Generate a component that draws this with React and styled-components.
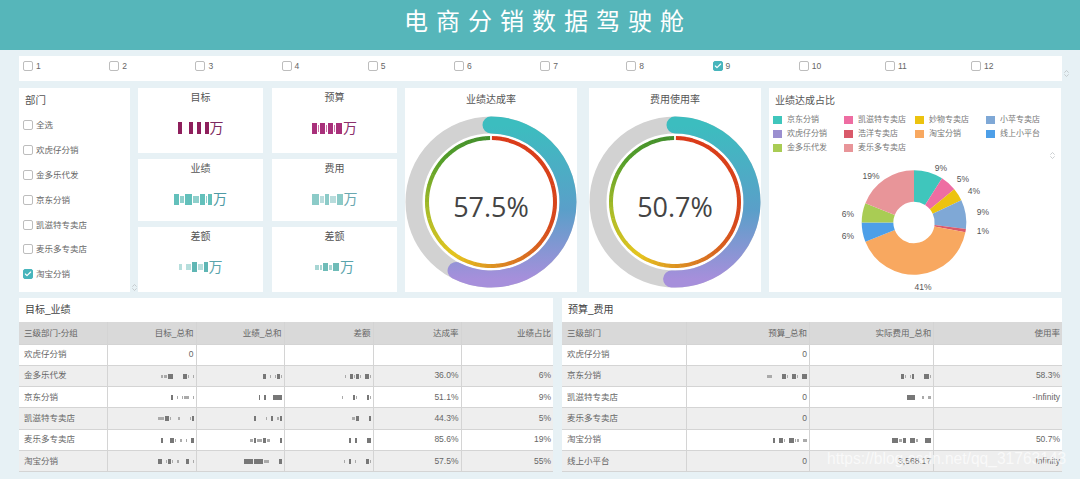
import React from 'react';
import styled, { createGlobalStyle } from 'styled-components';
import { Check, ChevronsUpDown } from 'lucide-react';

const FONT = '"Liberation Sans", "Noto Sans CJK SC", sans-serif';

const GlobalStyle = createGlobalStyle`
	html, body {
		margin: 0;
		padding: 0;
		background: #e7f1f5;
		font-family: ${FONT};
	}
`;

const Page = styled.div`
	position: relative;
	width: 1080px;
	height: 479px;
	overflow: hidden;
	background: #e7f1f5;
`;

const Header = styled.header`
	height: 50px;
	background: #56b6ba;
	color: #fff;
	font-size: 24px;
	line-height: 44px;
	letter-spacing: 8px;
	text-align: center;
	text-indent: 16px;
`;

const Content = styled.main`
	display: flex;
	flex-direction: column;
	gap: 6px;
	padding: 6px 18px 0 19px;
`;

const Card = styled.section`
	position: relative;
	background: #fff;
`;

const MonthBar = styled(Card)`
	display: grid;
	grid-template-columns: repeat(12, 86.2px);
	align-items: center;
	box-sizing: border-box;
	height: 25px;
	padding: 0 0 5px 4px;
	margin-bottom: 1px;
`;

const Hint = styled.span`
	position: absolute;
	display: flex;
	right: ${(p) => p.$right}px;
	bottom: ${(p) => p.$bottom}px;
	color: #b9bfc2;
`;

const Option = styled.label`
	display: flex;
	align-items: center;
	gap: 3px;
	font-size: 8.5px;
	line-height: 10px;
	color: #666;
`;

const Box = styled.span`
	display: flex;
	align-items: center;
	justify-content: center;
	box-sizing: border-box;
	width: 10px;
	height: 10px;
	border-radius: 2px;
	color: #fff;
	background: ${(p) => (p.$checked ? '#47b5bc' : '#fff')};
	border: 1px solid ${(p) => (p.$checked ? '#47b5bc' : '#bdbdbd')};
`;

const MiddleRow = styled.div`
	display: flex;
	height: 204px;
`;

const DeptCard = styled(Card)`
	width: 111px;
	margin-right: 8px;
	padding: 6px 0 0 4px;
	box-sizing: border-box;
`;

const DeptTitle = styled.h3`
	margin: 0 0 13px 2px;
	font-size: 10.5px;
	line-height: 13px;
	font-weight: 400;
	color: #555;
`;

const DeptList = styled.div`
	display: flex;
	flex-direction: column;
	gap: 14.9px;
`;

const KpiGrid = styled.div`
	display: grid;
	grid-template-columns: 125px 125px;
	grid-template-rows: 65px 62px 65px;
	gap: 6px 9px;
	width: 259px;
	margin-right: 8px;
`;

const KpiCard = styled(Card)`
	display: flex;
	flex-direction: column;
	align-items: center;
`;

const KpiTitle = styled.div`
	margin-top: 3px;
	font-size: 10px;
	line-height: 14px;
	color: #555;
`;

const KpiValue = styled.div`
	display: flex;
	align-items: center;
	gap: 1px;
	height: 16px;
	margin-top: 15px;
	font-size: 14px;
	line-height: 16px;
	color: ${(p) => p.$color};
`;

const GaugeCard = styled(Card)`
	width: 172px;
	margin-right: ${(p) => p.$gap}px;
`;

const ChartTitle = styled.h3`
	margin: 0;
	font-size: 10px;
	line-height: 24px;
	font-weight: 400;
	color: #555;
	text-align: center;
`;

const ChartSvg = styled.svg`
	display: block;
`;

const PieCard = styled(Card)`
	width: 292px;
	box-sizing: border-box;
`;

const PieTitle = styled.h3`
	margin: 0;
	padding: 6px 0 0 6px;
	font-size: 10px;
	line-height: 14px;
	font-weight: 400;
	color: #555;
`;

const Legend = styled.div`
	display: grid;
	grid-template-columns: repeat(4, 71px);
	grid-auto-rows: 14.4px;
	align-items: center;
	padding: 4.5px 0 0 4px;
	height: 47px;
	box-sizing: border-box;
`;

const LegendItem = styled.div`
	display: flex;
	align-items: center;
	gap: 5px;
	font-size: 8px;
	line-height: 10px;
	color: #777;
`;

const Swatch = styled.span`
	width: 9px;
	height: 8px;
	background: ${(p) => p.$color};
`;

const TablesRow = styled.div`
	display: flex;
	gap: 9px;
`;

const TableCard = styled(Card)`
	width: ${(p) => p.$width}px;
`;

const TableTitle = styled.h3`
	margin: 0;
	padding-left: 6px;
	font-size: 10px;
	line-height: 24px;
	font-weight: 400;
	color: #444;
`;

const Table = styled.table`
	width: 100%;
	border-collapse: collapse;
	table-layout: fixed;
	font-size: 8.5px;
	line-height: 10px;
	color: #666;

	th,
	td {
		height: 21.3px;
		padding: 0 2px 1px 5px;
		box-sizing: border-box;
		border: 1px solid #d4d4d4;
		border-width: 0 1px 1px 0;
		text-align: right;
		font-weight: 400;
		white-space: nowrap;
		overflow: hidden;
	}

	th {
		height: 22px;
		padding-bottom: 0;
		background: #d9d9d9;
	}

	th:first-child,
	td:first-child {
		text-align: left;
	}

	th:last-child,
	td:last-child {
		border-right: 0;
	}

	tbody tr:nth-child(even) td {
		background: #eeeeee;
	}
`;

const Mosaic = styled.span`
	display: inline-flex;
	align-items: center;
	justify-content: flex-end;
	vertical-align: middle;
`;

const Blot = styled.i`
	display: block;
	width: ${(p) => p.$w}px;
	height: ${(p) => p.$h}px;
	margin-left: ${(p) => p.$gap}px;
	background: ${(p) => p.$color};
`;

const Watermark = styled.div`
	position: absolute;
	left: 827px;
	top: 449px;
	font-size: 15.6px;
	line-height: 20px;
	color: rgba(255, 255, 255, 0.66);
	white-space: nowrap;
`;

// pattern: digit = tall block of that width, letter = low pale block (a=1 b=2 ...), _ = gap
const Redacted = ({ pattern, dark = '#777', light = '#aaa', tall = 5 }) => {
	let gap = 0;
	const blots = [];
	pattern.split('').forEach((c, i) => {
		if (c === '_') {
			gap += 3;
			return;
		}
		const isDigit = c >= '0' && c <= '9';
		blots.push(
			<Blot
				key={i}
				$w={isDigit ? Number(c) : c.charCodeAt(0) - 96}
				$h={isDigit ? tall : Math.round(tall * 0.6)}
				$gap={gap + (blots.length ? 1 : 0)}
				$color={isDigit ? dark : light}
			/>,
		);
		gap = 0;
	});
	return <Mosaic>{blots}</Mosaic>;
};

const polar = (cx, cy, r, deg) => {
	const a = ((deg - 90) * Math.PI) / 180;
	return [cx + r * Math.cos(a), cy + r * Math.sin(a)];
};

const arcPath = (cx, cy, r, from, to) => {
	const [x1, y1] = polar(cx, cy, r, from);
	const [x2, y2] = polar(cx, cy, r, to);
	return `M${x1} ${y1}A${r} ${r} 0 ${to - from > 180 ? 1 : 0} 1 ${x2} ${y2}`;
};

const RING_STOPS = [
	[0, [219, 56, 24]],
	[110, [214, 72, 28]],
	[165, [218, 128, 34]],
	[215, [228, 196, 30]],
	[262, [170, 188, 40]],
	[310, [84, 158, 42]],
	[360, [64, 140, 44]],
];

const ringColor = (deg) => {
	const next = RING_STOPS.findIndex((s) => s[0] >= deg);
	if (next <= 0) return `rgb(${RING_STOPS[0][1].join(',')})`;
	const [d0, c0] = RING_STOPS[next - 1];
	const [d1, c1] = RING_STOPS[next];
	const t = (deg - d0) / (d1 - d0);
	return `rgb(${c0.map((v, i) => Math.round(v + (c1[i] - v) * t)).join(',')})`;
};

const RING_SEGMENTS = Array.from({ length: 72 }, (_, i) => i * 5);

const Gauge = ({ id, value, cy }) => {
	const end = (value / 100) * 360;
	return (
		<ChartSvg width="172" height="180" viewBox="0 0 172 180">
			<defs>
				<linearGradient id={id} x1="0" y1="0" x2="0" y2="1">
					<stop offset="0" stopColor="#3cbdbf" />
					<stop offset="0.55" stopColor="#5a9fc9" />
					<stop offset="1" stopColor="#a68fdb" />
				</linearGradient>
			</defs>
			<circle cx="86" cy={cy} r="77" fill="none" stroke="#d2d2d2" strokeWidth="17" />
			<path
				d={arcPath(86, cy, 77, 0, end)}
				fill="none"
				stroke={`url(#${id})`}
				strokeWidth="17"
				strokeLinecap="round"
			/>
			<circle cx="86" cy={cy} r="66.5" fill="#fff" />
			{RING_SEGMENTS.map((d) => (
				<path
					key={d}
					d={arcPath(86, cy, 64, d + (d === 0 ? 0.8 : 0), d === 355 ? 359.2 : d + 5.4)}
					fill="none"
					stroke={ringColor(d + 2.5)}
					strokeWidth="4"
				/>
			))}
			<text
				x="86"
				y={cy + 15}
				textAnchor="middle"
				fontFamily='"Open Sans", sans-serif'
				fontSize="27"
				fill="#444"
			>
				{value}%
			</text>
		</ChartSvg>
	);
};

const SLICES = [
	{ name: '京东分销', pct: 9, color: '#3fc6bc', x: 172, y: 16 },
	{ name: '凯滋特专卖店', pct: 5, color: '#ee6da2', x: 194, y: 27 },
	{ name: '妙物专卖店', pct: 4, color: '#ecc30f', x: 205, y: 39 },
	{ name: '小苹专卖店', pct: 9, color: '#7fa8d6', x: 214, y: 60 },
	{ name: '浩洋专卖店', pct: 1, color: '#d9596a', x: 214, y: 79 },
	{ name: '淘宝分销', pct: 41, color: '#f8a860', x: 154, y: 135 },
	{ name: '线上小平台', pct: 6, color: '#4d9fe8', x: 79, y: 84 },
	{ name: '金多乐代发', pct: 6, color: '#a9cc54', x: 79, y: 62 },
	{ name: '麦乐多专卖店', pct: 19, color: '#e89599', x: 102, y: 24 },
];

const LEGEND = [
	['京东分销', '#3fc6bc'],
	['凯滋特专卖店', '#ee6da2'],
	['妙物专卖店', '#ecc30f'],
	['小苹专卖店', '#7fa8d6'],
	['欢虎仔分销', '#9b8fd0'],
	['浩洋专卖店', '#d9596a'],
	['淘宝分销', '#f8a860'],
	['线上小平台', '#4d9fe8'],
	['金多乐代发', '#a9cc54'],
	['麦乐多专卖店', '#e89599'],
];

const Donut = () => {
	const cx = 145;
	const cy = 67.5;
	const R = 52.3;
	const r = 20.7;
	let at = 0;
	return (
		<ChartSvg width="292" height="137" viewBox="0 0 292 137">
			{SLICES.map((s) => {
				const from = at;
				const to = at + s.pct * 3.6;
				at = to;
				const [x1, y1] = polar(cx, cy, R, from);
				const [x2, y2] = polar(cx, cy, R, to);
				const [x3, y3] = polar(cx, cy, r, to);
				const [x4, y4] = polar(cx, cy, r, from);
				const large = to - from > 180 ? 1 : 0;
				return (
					<path
						key={s.name}
						fill={s.color}
						d={`M${x1} ${y1}A${R} ${R} 0 ${large} 1 ${x2} ${y2}L${x3} ${y3}A${r} ${r} 0 ${large} 0 ${x4} ${y4}Z`}
					/>
				);
			})}
			{SLICES.map((s) => (
				<text
					key={s.name}
					x={s.x}
					y={s.y}
					textAnchor="middle"
					fontFamily='"Liberation Sans", sans-serif'
					fontSize="8.5"
					fill="#555"
				>
					{s.pct}%
				</text>
			))}
		</ChartSvg>
	);
};

const MONTHS = Array.from({ length: 12 }, (_, i) => i + 1);
const DEPTS = ['全选', '欢虎仔分销', '金多乐代发', '京东分销', '凯滋特专卖店', '麦乐多专卖店', '淘宝分销'];

const KPIS = [
	{ title: '目标', pattern: '4__4_4_4', color: '#7c2a60', dark: '#8e1f5c', light: '#c06a96', tall: 12 },
	{ title: '预算', pattern: '5a5a5a6', color: '#8c2f6c', dark: '#a8307a', light: '#d070a8', tall: 11 },
	{ title: '业绩', pattern: '5d7f5a4', color: '#4e9aa4', dark: '#63c0bb', light: '#8fd0cc', tall: 11 },
	{ title: '费用', pattern: '7d4f6', color: '#6aa8b0', dark: '#8ccbc8', light: '#b8dcdc', tall: 11 },
	{ title: '差额', pattern: 'c_e5e4', color: '#5aa4ac', dark: '#5fb6b4', light: '#b6dedc', tall: 10 },
	{ title: '差额', pattern: 'db5c6', color: '#5aa4ac', dark: '#6fbcb8', light: '#a8d6d4', tall: 8 },
];

const LEFT_COLS = [88, 89, 88, 89, 88, 92];
const RIGHT_COLS = [124, 123, 124, 128];

const LEFT_ROWS = [
	['欢虎仔分销', '0', '', '', '', ''],
	['金多乐代发', { p: 'bc5___4a_a' }, { p: '3_a_a3a' }, { p: 'a_3a3a_4a' }, '36.0%', '6%'],
	['京东分销', { p: '2_a_ae_a' }, { p: '1_2__9' }, { p: 'a___2a___2a' }, '51.1%', '9%'],
	['凯滋特专卖店', { p: 'f4a__b___a2' }, { p: '2___a_2_b2' }, { p: 'c3___2' }, '44.3%', '5%'],
	['麦乐多专卖店', { p: '2__4a_b_a_3' }, { p: 'c2e3c___2' }, { p: '2_2___4' }, '85.6%', '19%'],
	['淘宝分销', { p: '4_a3a_b__3_a' }, { p: '99e___3' }, { p: 'a_2_a___3a' }, '57.5%', '55%'],
];

const RIGHT_ROWS = [
	['欢虎仔分销', '0', '', ''],
	['京东分销', { p: 'e___4a_4a_5' }, { p: '3a_a2___5a' }, '58.3%'],
	['凯滋特专卖店', '0', { p: '8__b_c' }, '-Infinity'],
	['麦乐多专卖店', '0', '', ''],
	['淘宝分销', { p: '2_4a_5ab_d' }, { p: '6c3_5b__6' }, '50.7%'],
	['线上小平台', '0', '3,568.17', 'Infinity'],
];

const DataTable = ({ title, width, cols, head, rows }) => (
	<TableCard $width={width}>
		<TableTitle>{title}</TableTitle>
		<Table>
			<colgroup>
				{cols.map((w, i) => (
					<col key={i} width={w} />
				))}
			</colgroup>
			<thead>
				<tr>
					{head.map((h) => (
						<th key={h}>{h}</th>
					))}
				</tr>
			</thead>
			<tbody>
				{rows.map((row) => (
					<tr key={row[0]}>
						{row.map((cell, i) => (
							<td key={i}>{cell && cell.p ? <Redacted pattern={cell.p} /> : cell}</td>
						))}
					</tr>
				))}
			</tbody>
		</Table>
	</TableCard>
);

const CheckOption = ({ label, checked }) => (
	<Option>
		<Box $checked={checked}>{checked && <Check size={8} strokeWidth={3.5} />}</Box>
		{label}
	</Option>
);

const App = () => (
	<Page>
		<GlobalStyle />
		<Header>电商分销数据驾驶舱</Header>
		<Content>
			<MonthBar>
				{MONTHS.map((m) => (
					<CheckOption key={m} label={m} checked={m === 9} />
				))}
				<Hint $right={-9} $bottom={3}>
					<ChevronsUpDown size={9} />
				</Hint>
			</MonthBar>
			<MiddleRow>
				<DeptCard>
					<DeptTitle>部门</DeptTitle>
					<DeptList>
						{DEPTS.map((d) => (
							<CheckOption key={d} label={d} checked={d === '淘宝分销'} />
						))}
					</DeptList>
					<Hint $right={-9} $bottom={0}>
						<ChevronsUpDown size={9} />
					</Hint>
				</DeptCard>
				<KpiGrid>
					{KPIS.map((k, i) => (
						<KpiCard key={i}>
							<KpiTitle>{k.title}</KpiTitle>
							<KpiValue $color={k.color}>
								<Redacted pattern={k.pattern} dark={k.dark} light={k.light} tall={k.tall} />
								万
							</KpiValue>
						</KpiCard>
					))}
				</KpiGrid>
				<GaugeCard $gap={12}>
					<ChartTitle>业绩达成率</ChartTitle>
					<Gauge id="gaugeA" value="57.5" cy={90} />
				</GaugeCard>
				<GaugeCard $gap={8}>
					<ChartTitle>费用使用率</ChartTitle>
					<Gauge id="gaugeB" value="50.7" cy={90} />
				</GaugeCard>
				<PieCard>
					<PieTitle>业绩达成占比</PieTitle>
					<Legend>
						{LEGEND.map(([name, color]) => (
							<LegendItem key={name}>
								<Swatch $color={color} />
								{name}
							</LegendItem>
						))}
					</Legend>
					<Hint $right={4} $bottom={132}>
						<ChevronsUpDown size={9} />
					</Hint>
					<Donut />
				</PieCard>
			</MiddleRow>
			<TablesRow>
				<DataTable
					title="目标_业绩"
					width={534}
					cols={LEFT_COLS}
					head={['三级部门-分组', '目标_总和', '业绩_总和', '差额', '达成率', '业绩占比']}
					rows={LEFT_ROWS}
				/>
				<DataTable
					title="预算_费用"
					width={500}
					cols={RIGHT_COLS}
					head={['三级部门', '预算_总和', '实际费用_总和', '使用率']}
					rows={RIGHT_ROWS}
				/>
			</TablesRow>
		</Content>
		<Watermark>https://blog.csdn.net/qq_31763143</Watermark>
	</Page>
);

export default App;
